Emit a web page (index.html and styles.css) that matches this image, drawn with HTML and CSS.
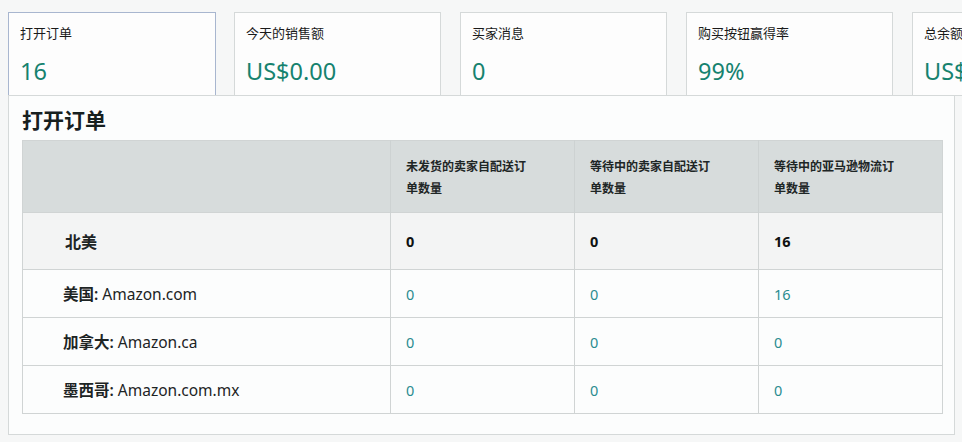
FILE: index.html
```html
<!DOCTYPE html>
<html lang="zh-CN">
<head>
<meta charset="utf-8">
<title>打开订单</title>
<link rel="stylesheet" href="styles.css">
</head>
<body>
<div class="page">
  <div class="cards">
    <div class="card card-active">
      <div class="card-label">打开订单</div>
      <div class="card-value">16</div>
    </div>
    <div class="card">
      <div class="card-label">今天的销售额</div>
      <div class="card-value">US$0.00</div>
    </div>
    <div class="card">
      <div class="card-label">买家消息</div>
      <div class="card-value">0</div>
    </div>
    <div class="card">
      <div class="card-label">购买按钮赢得率</div>
      <div class="card-value">99%</div>
    </div>
    <div class="card">
      <div class="card-label">总余额</div>
      <div class="card-value">US$0.00</div>
    </div>
  </div>
  <div class="popup">
    <h2 class="popup-title">打开订单</h2>
    <table class="orders">
      <colgroup>
        <col class="c-region">
        <col class="c-num">
        <col class="c-num">
        <col class="c-num">
      </colgroup>
      <thead>
        <tr>
          <th></th>
          <th>未发货的卖家自配送订<br>单数量</th>
          <th>等待中的卖家自配送订<br>单数量</th>
          <th>等待中的亚马逊物流订<br>单数量</th>
        </tr>
      </thead>
      <tbody>
        <tr class="row-total">
          <td class="region">北美</td>
          <td>0</td>
          <td>0</td>
          <td>16</td>
        </tr>
        <tr>
          <td class="region"><b>美国:</b> Amazon.com</td>
          <td class="link">0</td>
          <td class="link">0</td>
          <td class="link">16</td>
        </tr>
        <tr>
          <td class="region"><b>加拿大:</b> Amazon.ca</td>
          <td class="link">0</td>
          <td class="link">0</td>
          <td class="link">0</td>
        </tr>
        <tr>
          <td class="region"><b>墨西哥:</b> Amazon.com.mx</td>
          <td class="link">0</td>
          <td class="link">0</td>
          <td class="link">0</td>
        </tr>
      </tbody>
    </table>
  </div>
</div>
</body>
</html>
```
FILE: styles.css
```css
* { box-sizing: border-box; }
html, body { margin: 0; padding: 0; }
body {
  width: 962px;
  height: 442px;
  overflow: hidden;
  background: #f6f7f7;
  font-family: "Noto Sans", "Noto Sans CJK SC", sans-serif;
  color: #0f1111;
}
.page {
  padding: 12px 0 0 8px;
}
.cards {
  display: flex;
  gap: 19px;
  overflow: hidden;
}
.card {
  flex: 0 0 207px;
  height: 84px;
  background: #fdfdfd;
  border: 1px solid #d5d9d9;
  padding: 10px 11px 0 11px;
}
.card:first-child { flex-basis: 208px; margin-right: -1px; }
.card-active {
  border-color: #a8b6cf;
}
.card-label {
  font-size: 13px;
  line-height: 20px;
  color: #1a1a1a;
}
.card-value {
  margin-top: 13px;
  font-size: 23.5px;
  line-height: 30px;
  color: #16826f;
}
.popup {
  position: relative;
  margin-top: -1px;
  width: 947px;
  height: 340px;
  background: #fcfdfd;
  border: 1px solid #d5d9d9;
  padding: 0 12px 0 13px;
}
.popup-title {
  margin: 0;
  height: 44px;
  padding-top: 12px;
  font-size: 21px;
  line-height: 24px;
  font-weight: 700;
  color: #17201f;
}
.orders {
  width: 920px;
  border-collapse: collapse;
  table-layout: fixed;
  border: 1px solid #d0d4d4;
}
.c-region { width: 368px; }
.c-num { width: 184px; }
.orders th {
  height: 72px;
  background: #d7dcdc;
  text-align: left;
  vertical-align: middle;
  font-size: 12px;
  line-height: 22px;
  font-weight: 600;
  color: #1e2626;
  padding: 2px 15px 0 15px;
  border-left: 1px solid #cdd2d2;
}
.orders th:first-child { border-left: none; }
.orders td {
  height: 48px;
  border: 1px solid #d0d4d4;
  padding: 0 15px;
  font-size: 14.5px;
  color: #0f1111;
  vertical-align: middle;
}
.orders td.region {
  padding-left: 40px;
  font-size: 15.5px;
  color: #1d2424;
}
.orders td.region b { font-weight: 600; }
.row-total td {
  height: 57px;
  background: #f3f4f4;
  font-weight: 700;
}
.row-total td.region {
  padding-left: 42px;
  font-size: 16px;
  font-weight: 600;
}
.orders td.link {
  color: #2a8c90;
}
```
